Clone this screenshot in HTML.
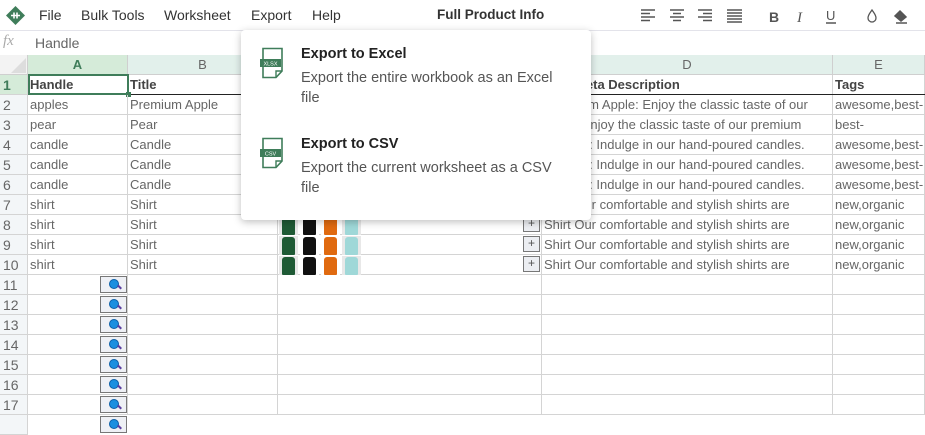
<!DOCTYPE html>
<html><head><meta charset="utf-8"><style>
*{box-sizing:border-box;margin:0;padding:0}
body{width:925px;height:420px;overflow:hidden;background:#fff;font-family:"Liberation Sans",Arial,sans-serif;color:#555;position:relative}
.a{position:absolute}
.menu{font-size:14px;color:#333;top:7px}
.c{position:absolute;height:20px;border-right:1px solid #d4d4d4;border-bottom:1px solid #d4d4d4;font-size:13px;line-height:19px;padding-left:2px;white-space:nowrap;overflow:hidden;color:#666}
.rh{position:absolute;left:0;width:28px;height:20px;background:#f3f6f8;border-right:1px solid #d4d4d4;border-bottom:1px solid #d4d4d4;font-size:14px;line-height:20px;padding-left:3px;color:#666}
.ch{position:absolute;top:55px;height:20px;background:#e2f0eb;border-right:1px solid #cfcfcf;border-bottom:1px solid #cfcfcf;font-size:13px;line-height:20px;text-align:center;color:#666}
.mag{position:absolute;left:100px;width:27px;height:17px;border:1px solid #777;background:#eef0f5}
.mag::before{content:"";position:absolute;left:8px;top:2px;width:8px;height:8px;border-radius:50%;background:#1a8fe0;border:1px solid #0a5fa8}
.mag::after{content:"";position:absolute;left:16px;top:9px;width:5px;height:2px;background:#5a3fa0;transform:rotate(45deg)}
.plus{position:absolute;left:523px;width:17px;height:16px;border:1px solid #777;background:#eceef2;font-size:12px;line-height:13px;text-align:center;color:#555}
.sh{position:absolute;width:19px;height:19px;background:#e8e8e8}
.sh i{position:absolute;left:3px;top:1px;width:13px;height:18px;border-radius:3px 3px 1px 1px}
.dd{position:absolute;left:241px;top:30px;width:350px;height:190px;background:#fff;border-radius:4px;box-shadow:0 2px 8px rgba(0,0,0,.25)}
.dd h4{position:absolute;left:60px;font-size:14.5px;color:#222;font-weight:bold}
.dd p{position:absolute;left:60px;width:270px;font-size:14.5px;line-height:20px;color:#555}
.ic{position:absolute;left:19px}
</style></head><body>
<svg class="a" style="left:6px;top:6px" width="19" height="19" viewBox="0 0 19 19"><path d="M9.5 0L19 9.5 9.5 19 0 9.5z" fill="#3f7d5a"/><path d="M5 9.5h9M8 6.5v6M11 6.5v6" stroke="#fff" stroke-width="1.6"/></svg>
<div class="a menu" style="left:39px">File</div>
<div class="a menu" style="left:81px">Bulk Tools</div>
<div class="a menu" style="left:164px">Worksheet</div>
<div class="a menu" style="left:251px">Export</div>
<div class="a menu" style="left:312px">Help</div>
<div class="a" style="left:437px;top:7px;font-size:13.5px;font-weight:bold;color:#333">Full Product Info</div>
<svg class="a" style="left:640px;top:8px" width="280" height="16" viewBox="0 0 280 16" fill="none" stroke="#555" stroke-width="1.5">
<path d="M1 2h14M1 5.5h9M1 9h14M1 12.5h9"/>
<path d="M30 2h14M33 5.5h8M30 9h14M33 12.5h8"/>
<path d="M58 2h14M63 5.5h9M58 9h14M63 12.5h9"/>
<path d="M87 2h15M87 5h15M87 8h15M87 11h15M87 14h15"/>
<text x="129" y="14" font-family="Liberation Sans" font-weight="bold" font-size="14" fill="#555" stroke="none">B</text>
<text x="157" y="14" font-family="Liberation Serif" font-style="italic" font-size="15" fill="#555" stroke="none">I</text>
<text x="186" y="12" font-family="Liberation Sans" font-size="13" fill="#555" stroke="none">U</text><path d="M186 15h10"/>
<path d="M232 2c-2 3-4 5-4 8a4 4 0 0 0 8 0c0-3-2-5-4-8z" stroke-width="1.3"/>
<path d="M260 3l6 6-5 4-6-5z" fill="#555"/><path d="M256 15h11"/>
</svg>
<div class="a" style="left:0;top:30px;width:925px;border-top:1px solid #e3e3ea"></div>
<div class="a" style="left:3px;top:33px;font-family:'Liberation Serif',serif;font-style:italic;font-size:15px;color:#aaa">fx</div>
<div class="a" style="left:35px;top:35px;font-size:14px;color:#666">Handle</div>
<div class="a" style="left:0;top:55px;width:28px;height:20px;background:#f3f3f3;border-right:1px solid #cfcfcf;border-bottom:1px solid #cfcfcf"></div>
<svg class="a" style="left:10px;top:58px" width="16" height="15"><path d="M16 0V15H1z" fill="#ddd"/></svg>
<div class="ch" style="left:28px;width:100px;background:#d5ebd9;color:#3f7d5a;font-weight:bold">A</div>
<div class="ch" style="left:128px;width:150px">B</div>
<div class="ch" style="left:278px;width:264px">C</div>
<div class="ch" style="left:542px;width:291px">D</div>
<div class="ch" style="left:833px;width:92px">E</div>
<div class="rh" style="top:75px;background:#d5ebd9;color:#3f7d5a;font-weight:bold">1</div>
<div class="c" style="top:75px;left:28px;width:100px;font-weight:bold;color:#444">Handle</div>
<div class="c" style="top:75px;left:128px;width:150px;font-weight:bold;color:#444">Title</div>
<div class="c" style="top:75px;left:278px;width:264px"></div>
<div class="c" style="top:75px;left:542px;width:291px;font-weight:bold;color:#444">SEO Meta Description</div>
<div class="c" style="top:75px;left:833px;width:92px;font-weight:bold;color:#444">Tags</div>
<div class="a" style="left:28px;top:94px;width:897px;border-top:1.5px solid #222"></div>
<div class="a" style="left:28px;top:74px;width:101px;height:21px;border:2px solid #3f7d5a"></div>
<div class="a" style="left:126px;top:92px;width:5px;height:5px;background:#3f7d5a"></div>

<div class="rh" style="top:95px">2</div><div class="c" style="top:95px;left:28px;width:100px">apples</div><div class="c" style="top:95px;left:128px;width:150px">Premium Apple</div><div class="c" style="top:95px;left:278px;width:264px"></div><div class="c" style="top:95px;left:542px;width:291px;padding-left:5px">Premium Apple: Enjoy the classic taste of our</div><div class="c" style="top:95px;left:833px;width:92px">awesome,best-</div>
<div class="rh" style="top:115px">3</div><div class="c" style="top:115px;left:28px;width:100px">pear</div><div class="c" style="top:115px;left:128px;width:150px">Pear</div><div class="c" style="top:115px;left:278px;width:264px"></div><div class="c" style="top:115px;left:542px;width:291px;padding-left:5px">Pear: Enjoy the classic taste of our premium</div><div class="c" style="top:115px;left:833px;width:92px">best-</div>
<div class="rh" style="top:135px">4</div><div class="c" style="top:135px;left:28px;width:100px">candle</div><div class="c" style="top:135px;left:128px;width:150px">Candle</div><div class="c" style="top:135px;left:278px;width:264px"></div><div class="c" style="top:135px;left:542px;width:291px;padding-left:6px">Candle: Indulge in our hand-poured candles.</div><div class="c" style="top:135px;left:833px;width:92px">awesome,best-</div>
<div class="rh" style="top:155px">5</div><div class="c" style="top:155px;left:28px;width:100px">candle</div><div class="c" style="top:155px;left:128px;width:150px">Candle</div><div class="c" style="top:155px;left:278px;width:264px"></div><div class="c" style="top:155px;left:542px;width:291px;padding-left:6px">Candle: Indulge in our hand-poured candles.</div><div class="c" style="top:155px;left:833px;width:92px">awesome,best-</div>
<div class="rh" style="top:175px">6</div><div class="c" style="top:175px;left:28px;width:100px">candle</div><div class="c" style="top:175px;left:128px;width:150px">Candle</div><div class="c" style="top:175px;left:278px;width:264px"></div><div class="c" style="top:175px;left:542px;width:291px;padding-left:6px">Candle: Indulge in our hand-poured candles.</div><div class="c" style="top:175px;left:833px;width:92px">awesome,best-</div>
<div class="rh" style="top:195px">7</div><div class="c" style="top:195px;left:28px;width:100px">shirt</div><div class="c" style="top:195px;left:128px;width:150px">Shirt</div><div class="c" style="top:195px;left:278px;width:264px"></div><div class="c" style="top:195px;left:542px;width:291px">Shirt Our comfortable and stylish shirts are</div><div class="c" style="top:195px;left:833px;width:92px">new,organic</div>
<div class="rh" style="top:215px">8</div><div class="c" style="top:215px;left:28px;width:100px">shirt</div><div class="c" style="top:215px;left:128px;width:150px">Shirt</div><div class="c" style="top:215px;left:278px;width:264px"></div><div class="c" style="top:215px;left:542px;width:291px">Shirt Our comfortable and stylish shirts are</div><div class="c" style="top:215px;left:833px;width:92px">new,organic</div>
<div class="rh" style="top:235px">9</div><div class="c" style="top:235px;left:28px;width:100px">shirt</div><div class="c" style="top:235px;left:128px;width:150px">Shirt</div><div class="c" style="top:235px;left:278px;width:264px"></div><div class="c" style="top:235px;left:542px;width:291px">Shirt Our comfortable and stylish shirts are</div><div class="c" style="top:235px;left:833px;width:92px">new,organic</div>
<div class="rh" style="top:255px">10</div><div class="c" style="top:255px;left:28px;width:100px">shirt</div><div class="c" style="top:255px;left:128px;width:150px">Shirt</div><div class="c" style="top:255px;left:278px;width:264px"></div><div class="c" style="top:255px;left:542px;width:291px">Shirt Our comfortable and stylish shirts are</div><div class="c" style="top:255px;left:833px;width:92px">new,organic</div>

<div class="plus" style="top:216px">+</div><div class="plus" style="top:236px">+</div><div class="plus" style="top:256px">+</div>
<div class="sh" style="left:279px;top:216px"><i style="background:#1f5a35"></i></div><div class="sh" style="left:300px;top:216px;background:#fff"><i style="background:#111"></i></div><div class="sh" style="left:321px;top:216px;background:#fff"><i style="background:#e06a10"></i></div><div class="sh" style="left:342px;top:216px"><i style="background:#9fd8d8"></i></div>
<div class="sh" style="left:279px;top:236px"><i style="background:#1f5a35"></i></div><div class="sh" style="left:300px;top:236px;background:#fff"><i style="background:#111"></i></div><div class="sh" style="left:321px;top:236px;background:#fff"><i style="background:#e06a10"></i></div><div class="sh" style="left:342px;top:236px"><i style="background:#9fd8d8"></i></div>
<div class="sh" style="left:279px;top:256px"><i style="background:#1f5a35"></i></div><div class="sh" style="left:300px;top:256px;background:#fff"><i style="background:#111"></i></div><div class="sh" style="left:321px;top:256px;background:#fff"><i style="background:#e06a10"></i></div><div class="sh" style="left:342px;top:256px"><i style="background:#9fd8d8"></i></div>

<div class="rh" style="top:275px">11</div><div class="c" style="top:275px;left:28px;width:100px"></div><div class="c" style="top:275px;left:128px;width:150px"></div><div class="c" style="top:275px;left:278px;width:264px"></div><div class="c" style="top:275px;left:542px;width:291px"></div><div class="c" style="top:275px;left:833px;width:92px"></div>
<div class="rh" style="top:295px">12</div><div class="c" style="top:295px;left:28px;width:100px"></div><div class="c" style="top:295px;left:128px;width:150px"></div><div class="c" style="top:295px;left:278px;width:264px"></div><div class="c" style="top:295px;left:542px;width:291px"></div><div class="c" style="top:295px;left:833px;width:92px"></div>
<div class="rh" style="top:315px">13</div><div class="c" style="top:315px;left:28px;width:100px"></div><div class="c" style="top:315px;left:128px;width:150px"></div><div class="c" style="top:315px;left:278px;width:264px"></div><div class="c" style="top:315px;left:542px;width:291px"></div><div class="c" style="top:315px;left:833px;width:92px"></div>
<div class="rh" style="top:335px">14</div><div class="c" style="top:335px;left:28px;width:100px"></div><div class="c" style="top:335px;left:128px;width:150px"></div><div class="c" style="top:335px;left:278px;width:264px"></div><div class="c" style="top:335px;left:542px;width:291px"></div><div class="c" style="top:335px;left:833px;width:92px"></div>
<div class="rh" style="top:355px">15</div><div class="c" style="top:355px;left:28px;width:100px"></div><div class="c" style="top:355px;left:128px;width:150px"></div><div class="c" style="top:355px;left:278px;width:264px"></div><div class="c" style="top:355px;left:542px;width:291px"></div><div class="c" style="top:355px;left:833px;width:92px"></div>
<div class="rh" style="top:375px">16</div><div class="c" style="top:375px;left:28px;width:100px"></div><div class="c" style="top:375px;left:128px;width:150px"></div><div class="c" style="top:375px;left:278px;width:264px"></div><div class="c" style="top:375px;left:542px;width:291px"></div><div class="c" style="top:375px;left:833px;width:92px"></div>
<div class="rh" style="top:395px">17</div><div class="c" style="top:395px;left:28px;width:100px"></div><div class="c" style="top:395px;left:128px;width:150px"></div><div class="c" style="top:395px;left:278px;width:264px"></div><div class="c" style="top:395px;left:542px;width:291px"></div><div class="c" style="top:395px;left:833px;width:92px"></div>
<div class="rh" style="top:415px"></div>
<div class="mag" style="top:276px"></div><div class="mag" style="top:296px"></div><div class="mag" style="top:316px"></div><div class="mag" style="top:336px"></div><div class="mag" style="top:356px"></div><div class="mag" style="top:376px"></div><div class="mag" style="top:396px"></div><div class="mag" style="top:416px"></div>

<div class="dd">
<svg class="ic" style="top:17px" width="24" height="32" viewBox="0 0 24 32"><path d="M3 1.5H22V24L16 30.5H3z" fill="#fff" stroke="#3f7d5a" stroke-width="1.6"/><path d="M22 24H16V30.5" fill="none" stroke="#3f7d5a" stroke-width="1.4"/><rect x="0" y="12" width="21" height="8" fill="#3f7d5a"/><text x="10.5" y="18.3" font-family="Liberation Sans" font-size="5.5" fill="#fff" text-anchor="middle">XLSX</text></svg>
<h4 style="top:16px">Export to Excel</h4>
<p style="top:38px">Export the entire workbook as an Excel file</p>
<svg class="ic" style="top:107px" width="24" height="32" viewBox="0 0 24 32"><path d="M3 1.5H22V24L16 30.5H3z" fill="#fff" stroke="#3f7d5a" stroke-width="1.6"/><path d="M22 24H16V30.5" fill="none" stroke="#3f7d5a" stroke-width="1.4"/><rect x="0" y="12" width="21" height="8" fill="#3f7d5a"/><text x="10.5" y="18.3" font-family="Liberation Sans" font-size="5.5" fill="#fff" text-anchor="middle">CSV</text></svg>
<h4 style="top:106px">Export to CSV</h4>
<p style="top:128px">Export the current worksheet as a CSV file</p>
</div>
</body></html>
